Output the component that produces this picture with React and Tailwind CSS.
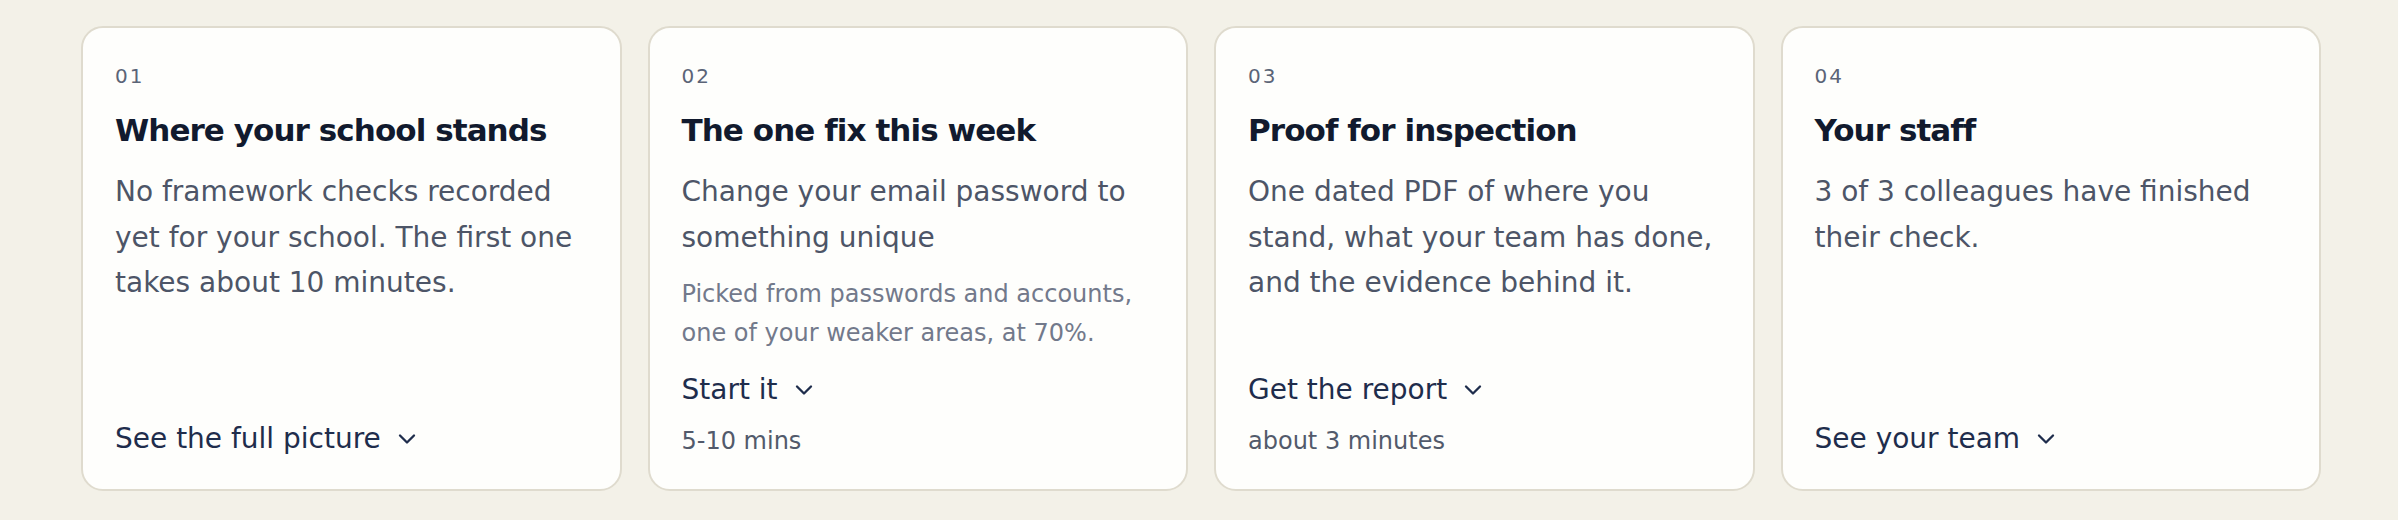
import { ChevronDown } from "lucide-react"

const cards = [
  {
    num: "01",
    title: "Where your school stands",
    body: "No framework checks recorded yet for your school. The first one takes about 10 minutes.",
    link: "See the full picture",
  },
  {
    num: "02",
    title: "The one fix this week",
    body: "Change your email password to something unique",
    note: "Picked from passwords and accounts, one of your weaker areas, at 70%.",
    link: "Start it",
    meta: "5-10 mins",
  },
  {
    num: "03",
    title: "Proof for inspection",
    body: "One dated PDF of where you stand, what your team has done, and the evidence behind it.",
    link: "Get the report",
    meta: "about 3 minutes",
  },
  {
    num: "04",
    title: "Your staff",
    body: "3 of 3 colleagues have finished their check.",
    link: "See your team",
  },
]

function Card({ card }) {
  return (
    <div className="h-[465px] flex flex-col rounded-[22px] border-2 border-[#dfdbce] bg-[#fefefc] px-[32px] pt-[34px] pb-[30px]">
      <div className="text-[20px] leading-[28px] tracking-[0.1em] text-[#5b6477]">{card.num}</div>
      <h3 className="mt-[20px] text-[31px] leading-[40px] font-bold tracking-[-0.03em] text-[#111a2e]">{card.title}</h3>
      <p className="mt-[19px] text-[28px] leading-[45.5px] text-[#4d5567]">{card.body}</p>
      {card.note && (
        <p className="mt-[15px] text-[24px] leading-[39px] text-[#72798b]">{card.note}</p>
      )}

      {/* actions sit at the bottom of every card */}
      <div className="mt-auto">
        <button className="flex items-center gap-3 text-[28px] leading-[40px] text-[#1f2d4c]">
          {card.link}
          <ChevronDown size={28} strokeWidth={2} />
        </button>
        {card.meta && (
          <div className="mt-[13px] text-[24px] leading-[36px] text-[#525a6b]">{card.meta}</div>
        )}
      </div>
    </div>
  )
}

export default function App() {
  return (
    <div className="bg-[#f3f1e8] pl-[81px] pr-[77px] pt-[26px] pb-[29px] font-['DejaVu_Sans',sans-serif]">
      <div className="grid grid-cols-4 gap-[26px]">
        {cards.map((card) => (
          <Card key={card.num} card={card} />
        ))}
      </div>
    </div>
  )
}
